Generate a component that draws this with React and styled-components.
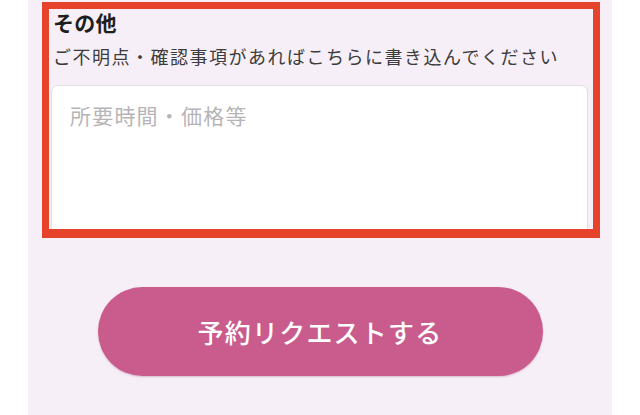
import React from "react";
import styled, { createGlobalStyle } from "styled-components";

const GlobalStyle = createGlobalStyle`
  html, body {
    margin: 0;
    padding: 0;
    background: #ffffff;
    font-family: "Noto Sans CJK JP", "Noto Sans", sans-serif;
  }
`;

const Page = styled.div`
  width: 640px;
  height: 415px;
  overflow: hidden;
  display: flex;
  justify-content: center;
`;

const Panel = styled.div`
  width: 584px;
  height: 100%;
  background: #f7eff7;
  padding-top: 2px;
  box-sizing: border-box;
  display: flex;
  flex-direction: column;
`;

// annotation frame around the "その他" field
const Highlight = styled.section`
  margin: 0 12px 0 14px;
  height: 236px;
  box-sizing: border-box;
  border: 7px solid #e5432c;
  border-bottom-width: 9px;
  overflow: hidden;
  padding: 0 5px 0 2px;
`;

const Title = styled.h3`
  margin: 0;
  padding-left: 2px;
  font-size: 21px;
  line-height: 27px;
  font-weight: 700;
  letter-spacing: 0.3px;
  color: #1e1e1e;
`;

const Description = styled.p`
  margin: 5px 0 0;
  padding-left: 2px;
  font-size: 18px;
  line-height: 30px;
  letter-spacing: 1.5px;
  color: #3c3c3c;
  white-space: nowrap;
`;

const TextArea = styled.textarea`
  display: block;
  width: 100%;
  height: 180px;
  margin-top: 14px;
  box-sizing: border-box;
  padding: 14px 18px;
  border: 1px solid #e2dde2;
  border-radius: 7px;
  background: #ffffff;
  font-family: inherit;
  font-size: 21px;
  line-height: 30px;
  letter-spacing: 1.2px;
  color: #333;
  resize: none;
  outline: none;

  &::placeholder {
    color: #b7b4b7;
  }
`;

const Actions = styled.div`
  display: flex;
  justify-content: center;
  margin-top: 49px;
`;

const SubmitButton = styled.button`
  width: 445px;
  height: 89px;
  border: none;
  border-radius: 45px;
  background: #c95c8d;
  box-shadow: 0 1px 2px rgba(120, 40, 80, 0.25);
  color: #ffffff;
  font-family: inherit;
  font-size: 26px;
  font-weight: 500;
  letter-spacing: 1.2px;
  cursor: pointer;
`;

const App = () => {
  return (
    <>
      <GlobalStyle />
      <Page>
        <Panel>
          <Highlight>
            <Title>その他</Title>
            <Description>ご不明点・確認事項があればこちらに書き込んでください</Description>
            <TextArea placeholder="所要時間・価格等" />
          </Highlight>
          <Actions>
            <SubmitButton>予約リクエストする</SubmitButton>
          </Actions>
        </Panel>
      </Page>
    </>
  );
};

export default App;
